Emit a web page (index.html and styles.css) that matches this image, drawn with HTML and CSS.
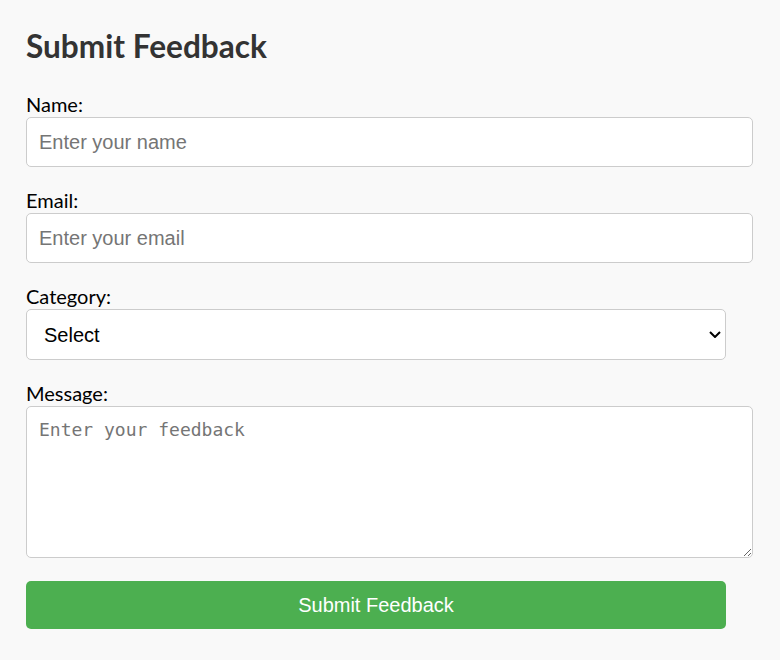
FILE: index.html
```html
<!DOCTYPE html>
<html lang="en">
<head>
<meta charset="utf-8">
<title>Submit Feedback</title>
<link rel="stylesheet" href="styles.css">
</head>
<body>
<div class="container">
  <h1 class="title">Submit Feedback</h1>
  <form class="form">
    <label class="label" for="name">Name:</label>
    <input class="field" type="text" id="name" placeholder="Enter your name">
    <label class="label" for="email">Email:</label>
    <input class="field" type="email" id="email" placeholder="Enter your email">
    <label class="label" for="category">Category:</label>
    <select class="select" id="category">
      <option>Select</option>
      <option>Bug</option>
      <option>Feature</option>
      <option>Other</option>
    </select>
    <label class="label" for="message">Message:</label>
    <textarea class="textarea" id="message" placeholder="Enter your feedback"></textarea>
    <button class="submit" type="button">Submit Feedback</button>
  </form>
</div>
</body>
</html>
```
FILE: styles.css
```css
html, body {
  margin: 0;
  background: #f9f9f9;
}
body {
  font-family: "Lato", "Liberation Sans", sans-serif;
  color: #000;
}
.container {
  width: 700px;
  padding: 26px 26px 20px;
}
.title {
  margin: 0 0 25px;
  font-size: 31.6px;
  line-height: 40px;
  font-weight: 700;
  color: #333;
}
.form {
  display: flex;
  flex-direction: column;
  align-items: flex-start;
}
.label {
  display: block;
  font-size: 20px;
  line-height: 26px;
  height: 26px;
}
.field, .textarea {
  width: 100%;
  box-sizing: content-box;
  padding: 12px 13px 12px 12px;
  border: 1px solid #ccc;
  border-radius: 5px;
  background: #fff;
  font-family: "Liberation Sans", Arial, sans-serif;
  font-size: 20px;
  margin: 0 0 20px;
  outline: none;
}
.field {
  height: 24px;
}
.field::placeholder, .textarea::placeholder {
  color: #757575;
}
.textarea {
  font-family: "DejaVu Sans Mono", monospace;
  font-size: 18px;
  height: 126px;
  margin-bottom: 23px;
  resize: vertical;
}
.select {
  -webkit-appearance: none;
  appearance: none;
  width: 700px;
  height: 51px;
  padding: 12px 28px 12px 17px;
  border: 1px solid #ccc;
  border-radius: 5px;
  background: #fff url("data:image/svg+xml,%3Csvg xmlns='http://www.w3.org/2000/svg' width='12' height='7' viewBox='0 0 12 7'%3E%3Cpolyline points='1,1 6,6 11,1' fill='none' stroke='%23000' stroke-width='2'/%3E%3C/svg%3E") no-repeat right 4px center;
  font-family: "Liberation Sans", Arial, sans-serif;
  font-size: 20px;
  color: #000;
  margin: 0 0 20px;
}
.submit {
  width: 700px;
  height: 48px;
  border: none;
  border-radius: 5px;
  background: #4caf50;
  color: #fff;
  font-family: "Liberation Sans", Arial, sans-serif;
  font-size: 20px;
  cursor: pointer;
}
```
